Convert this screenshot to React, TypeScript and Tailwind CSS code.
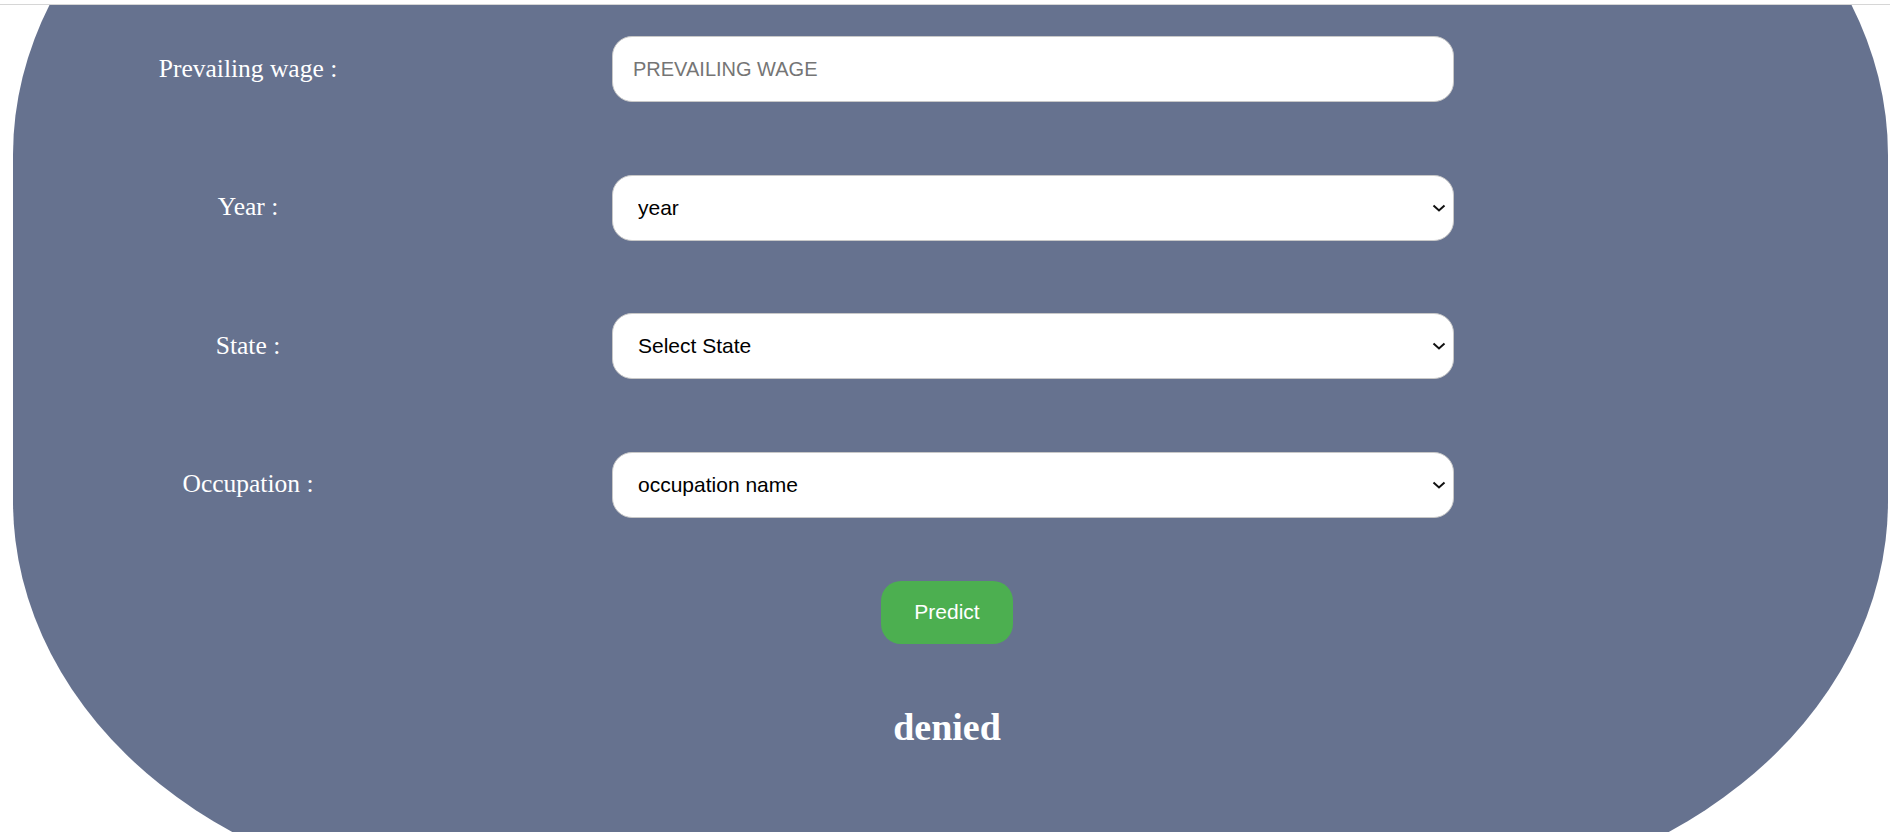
import { ChangeEvent, useState } from "react";

const selectFields = [
  { label: "Year :", placeholder: "year" },
  { label: "State :", placeholder: "Select State" },
  { label: "Occupation :", placeholder: "occupation name" },
];

function Chevron() {
  return (
    <svg
      width="14"
      height="8"
      viewBox="0 0 14 8"
      className="pointer-events-none absolute right-[8px] top-1/2 -translate-y-1/2"
    >
      <path d="M1.5 1.5 L7 6.5 L12.5 1.5" fill="none" stroke="#111" strokeWidth="2" />
    </svg>
  );
}

export default function App() {
  const [wage, setWage] = useState("");

  return (
    <div className="h-[832px] overflow-hidden bg-white">
      <div className="h-[5px] border-b border-[#d6d6d6]" />
      <div className="h-[827px] overflow-hidden">
        <div className="-mt-[250px] ml-[13px] mr-[2px] rounded-[500px/400px] bg-[#66728f] pt-[281px] pb-[152px]">
          <div className="flex flex-col gap-[72.5px]">
            <div className="flex h-[66px] items-center">
              <label className="w-[470px] text-center font-['Liberation_Serif',serif] text-[25.5px] text-white">
                Prevailing wage :
              </label>
              <input
                value={wage}
                onChange={(e: ChangeEvent<HTMLInputElement>) => setWage(e.target.value)}
                placeholder="PREVAILING WAGE"
                className="ml-[129px] h-[66px] w-[842px] rounded-[20px] border border-[#c8c8c8] bg-white px-[20px] font-['Liberation_Sans',sans-serif] text-[20px] text-black outline-none placeholder:text-[#757575]"
              />
            </div>
            {selectFields.map((f) => (
              <div key={f.label} className="flex h-[66px] items-center">
                <label className="w-[470px] text-center font-['Liberation_Serif',serif] text-[25.5px] text-white">
                  {f.label}
                </label>
                <div className="relative ml-[129px] w-[842px]">
                  <select
                    defaultValue=""
                    className="h-[66px] w-full appearance-none rounded-[20px] border border-[#c8c8c8] bg-white pl-[25px] pr-[40px] font-['Liberation_Sans',sans-serif] text-[21px] text-black outline-none"
                  >
                    <option value="">{f.placeholder}</option>
                  </select>
                  <Chevron />
                </div>
              </div>
            ))}
          </div>

          <div className="mt-[63px] flex flex-col items-center pr-[7px]">
            <button className="h-[63px] w-[132px] rounded-[20px] bg-[#4caf50] font-['Liberation_Sans',sans-serif] text-[21px] text-white">
              Predict
            </button>
            <h2 className="mt-[61px] font-['Liberation_Serif',serif] text-[38px] font-bold leading-[44px] text-white">
              denied
            </h2>
          </div>
        </div>
      </div>
    </div>
  );
}
